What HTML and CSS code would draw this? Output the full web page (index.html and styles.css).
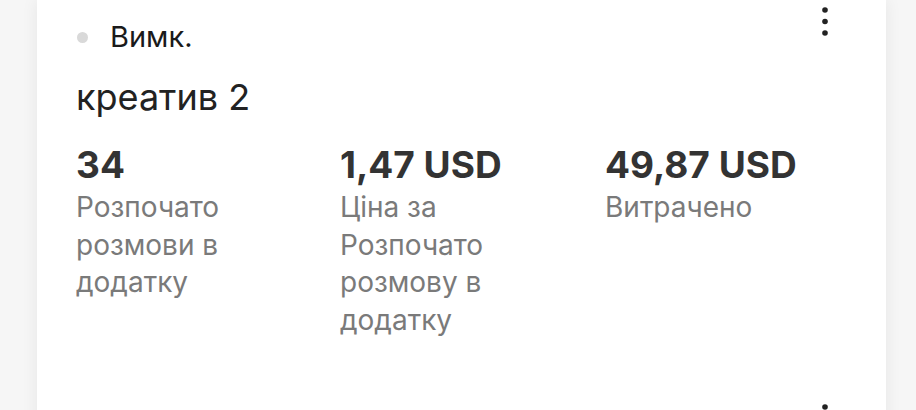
FILE: index.html
```html
<!DOCTYPE html>
<html lang="uk">
<head>
<meta charset="utf-8">
<link rel="stylesheet" href="styles.css">
</head>
<body>
<div class="list">
  <div class="item">
    <div class="head">
      <div class="status"><span class="dot"></span><span class="status-text">Вимк.</span></div>
      <svg class="kebab" width="24" height="40" viewBox="0 0 24 40"><circle cx="12" cy="10" r="2.8"/><circle cx="12" cy="21.5" r="2.8"/><circle cx="12" cy="33" r="2.8"/></svg>
    </div>
    <div class="title">креатив 2</div>
    <div class="stats">
      <div class="stat"><div class="value">34</div><div class="label">Розпочато розмови в додатку</div></div>
      <div class="stat"><div class="value">1,47 USD</div><div class="label">Ціна за Розпочато розмову в додатку</div></div>
      <div class="stat"><div class="value">49,87 USD</div><div class="label">Витрачено</div></div>
    </div>
  </div>
  <div class="item">
    <div class="head head-end">
      <svg class="kebab" width="24" height="40" viewBox="0 0 24 40"><circle cx="12" cy="10" r="2.8"/><circle cx="12" cy="21.5" r="2.8"/><circle cx="12" cy="33" r="2.8"/></svg>
    </div>
  </div>
</div>
</body>
</html>
```
FILE: styles.css
```css
html, body {
  margin: 0;
  padding: 0;
  background: #f6f6f6;
  font-family: Inter, "Noto Sans", sans-serif;
  overflow: hidden;
}
.list {
  margin-left: 37px;
  width: 849px;
  background: #ffffff;
  box-shadow: 0 0 16px rgba(0, 0, 0, 0.07);
}
.item {
  height: 397px;
  box-sizing: border-box;
  padding: 0 49px 0 39px;
}
.head {
  display: flex;
  justify-content: space-between;
  align-items: flex-start;
}
.head-end {
  justify-content: flex-end;
}
.status {
  margin-top: 20px;
  height: 34px;
  display: flex;
  align-items: center;
  gap: 22px;
}
.dot {
  width: 11px;
  height: 11px;
  margin-left: 1px;
  border-radius: 50%;
  background: #d9d9d9;
}
.status-text {
  font-size: 29px;
  line-height: 34px;
  color: #1a1a1a;
}
.kebab {
  fill: #222222;
  display: block;
}
.title {
  margin-top: 21px;
  font-size: 36px;
  line-height: 44px;
  color: #222222;
}
.stats {
  margin-top: 24px;
  display: grid;
  grid-template-columns: 264px 265px 1fr;
}
.value {
  font-size: 37px;
  font-weight: 700;
  line-height: 44px;
  color: #333333;
}
.label {
  margin-top: 2px;
  max-width: 230px;
  font-size: 28px;
  line-height: 37.5px;
  color: #7a7a7a;
}
```
